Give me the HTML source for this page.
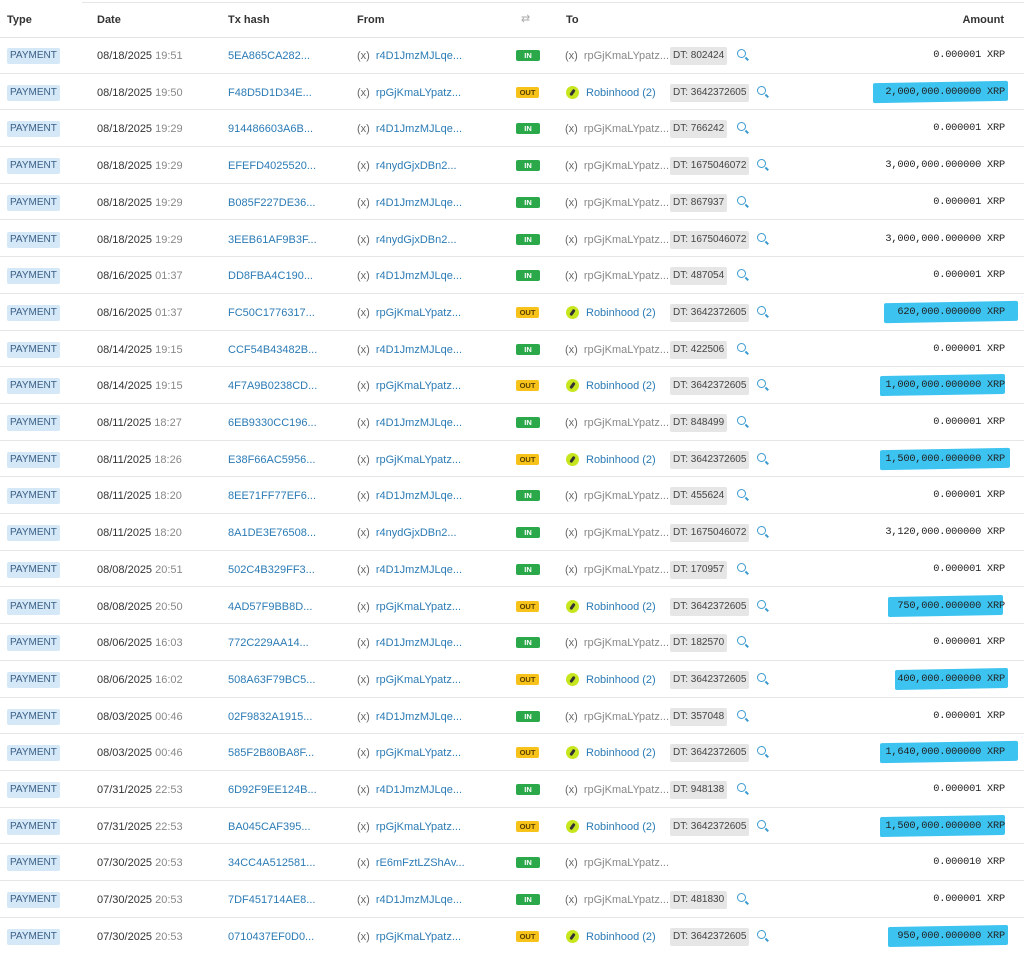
<!DOCTYPE html>
<html><head><meta charset="utf-8"><style>
body{margin:0;width:1024px;height:956px;background:#fff;font-family:"Liberation Sans",sans-serif;font-size:11px;color:#333;overflow:hidden;position:relative}
.top{position:absolute;left:82px;top:2px;right:0;border-top:1px solid #e6e6e6}
.h{position:absolute;top:0;left:0;width:1024px;height:37px;border-bottom:1px solid #e4e4e4;font-weight:bold;font-size:11px}
.h span{position:absolute;top:14px}
.r{position:absolute;left:0;width:1024px;height:36.7px;box-sizing:border-box;border-bottom:1px solid #e6e6e6}
.r>*{position:absolute}
.t{left:7px;top:11px;background:#d5e8f8;color:#3a5f85;font-size:10px;padding:2px 3px;border-radius:2px;line-height:12px}
.d{left:97px;top:13px}.d i{font-style:normal;color:#888}
.x{left:228px;top:13px;color:#2b7bb5}
.f{left:357px;top:13px;color:#2b7bb5}.f b,.to b{font-weight:normal;color:#666;margin-right:6px}
.in,.out{left:516px;top:13px;font-size:7.5px;font-weight:bold;line-height:11px;border-radius:2px;text-align:center}
.in{background:#2aa84a;color:#fff;width:24px}
.out{background:#f7c21a;color:#5a4000;width:23px}
.to{left:565px;top:13px;color:#888}
.rh{left:566px;top:12px;width:13px;height:13px;border-radius:50%;background:#c8e61e}
.rh:after{content:"";position:absolute;left:5px;top:3px;width:3px;height:7px;background:#333;border-radius:2px;transform:rotate(35deg)}
.rn{left:586px;top:13px;color:#2b7bb5}
.dt{left:670px;top:10px;background:#e6e6e6;color:#444;padding:3px 3px;border-radius:2px;line-height:12px;font-size:10px}
.m{top:12px;width:7px;height:7px;border:1.5px solid #3a9bd0;border-radius:50%}
.m:after{content:"";position:absolute;left:7px;top:8px;width:4px;height:1.5px;background:#3a9bd0;transform:rotate(45deg)}
.hl{background:#3cc3f0;height:20px;top:8px;border-radius:2px;transform:skewY(-1deg)}
.a{right:19px;top:12px;font-family:"Liberation Mono",monospace;font-size:10.3px;letter-spacing:-0.2px;color:#222}
</style></head><body>
<div class="top"></div>
<div class="h"><span style="left:7px">Type</span><span style="left:97px">Date</span><span style="left:228px">Tx hash</span><span style="left:357px">From</span><span style="left:521px;color:#aaa;font-weight:normal;top:12px">⇄</span><span style="left:566px">To</span><span style="right:20px">Amount</span></div>

<div class="r" style="top:37px"><span class="t">PAYMENT</span><span class="d">08/18/2025 <i>19:51</i></span><span class="x">5EA865CA282...</span><span class="f"><b>(x)</b>r4D1JmzMJLqe...</span><span class="in">IN</span><span class="to"><b>(x)</b>rpGjKmaLYpatz...</span><span class="dt">DT: 802424</span><span class="m" style="left:737px"></span><span class="a">0.000001 XRP</span></div>
<div class="r" style="top:73.7px"><span class="t">PAYMENT</span><span class="d">08/18/2025 <i>19:50</i></span><span class="x">F48D5D1D34E...</span><span class="f"><b>(x)</b>rpGjKmaLYpatz...</span><span class="out">OUT</span><span class="rh"></span><span class="rn">Robinhood (2)</span><span class="dt">DT: 3642372605</span><span class="m" style="left:757px"></span><span class="hl" style="left:873px;width:135px"></span><span class="a">2,000,000.000000 XRP</span></div>
<div class="r" style="top:110.4px"><span class="t">PAYMENT</span><span class="d">08/18/2025 <i>19:29</i></span><span class="x">914486603A6B...</span><span class="f"><b>(x)</b>r4D1JmzMJLqe...</span><span class="in">IN</span><span class="to"><b>(x)</b>rpGjKmaLYpatz...</span><span class="dt">DT: 766242</span><span class="m" style="left:737px"></span><span class="a">0.000001 XRP</span></div>
<div class="r" style="top:147.1px"><span class="t">PAYMENT</span><span class="d">08/18/2025 <i>19:29</i></span><span class="x">EFEFD4025520...</span><span class="f"><b>(x)</b>r4nydGjxDBn2...</span><span class="in">IN</span><span class="to"><b>(x)</b>rpGjKmaLYpatz...</span><span class="dt">DT: 1675046072</span><span class="m" style="left:757px"></span><span class="a">3,000,000.000000 XRP</span></div>
<div class="r" style="top:183.8px"><span class="t">PAYMENT</span><span class="d">08/18/2025 <i>19:29</i></span><span class="x">B085F227DE36...</span><span class="f"><b>(x)</b>r4D1JmzMJLqe...</span><span class="in">IN</span><span class="to"><b>(x)</b>rpGjKmaLYpatz...</span><span class="dt">DT: 867937</span><span class="m" style="left:737px"></span><span class="a">0.000001 XRP</span></div>
<div class="r" style="top:220.5px"><span class="t">PAYMENT</span><span class="d">08/18/2025 <i>19:29</i></span><span class="x">3EEB61AF9B3F...</span><span class="f"><b>(x)</b>r4nydGjxDBn2...</span><span class="in">IN</span><span class="to"><b>(x)</b>rpGjKmaLYpatz...</span><span class="dt">DT: 1675046072</span><span class="m" style="left:757px"></span><span class="a">3,000,000.000000 XRP</span></div>
<div class="r" style="top:257.2px"><span class="t">PAYMENT</span><span class="d">08/16/2025 <i>01:37</i></span><span class="x">DD8FBA4C190...</span><span class="f"><b>(x)</b>r4D1JmzMJLqe...</span><span class="in">IN</span><span class="to"><b>(x)</b>rpGjKmaLYpatz...</span><span class="dt">DT: 487054</span><span class="m" style="left:737px"></span><span class="a">0.000001 XRP</span></div>
<div class="r" style="top:293.9px"><span class="t">PAYMENT</span><span class="d">08/16/2025 <i>01:37</i></span><span class="x">FC50C1776317...</span><span class="f"><b>(x)</b>rpGjKmaLYpatz...</span><span class="out">OUT</span><span class="rh"></span><span class="rn">Robinhood (2)</span><span class="dt">DT: 3642372605</span><span class="m" style="left:757px"></span><span class="hl" style="left:884px;width:134px"></span><span class="a">620,000.000000 XRP</span></div>
<div class="r" style="top:330.6px"><span class="t">PAYMENT</span><span class="d">08/14/2025 <i>19:15</i></span><span class="x">CCF54B43482B...</span><span class="f"><b>(x)</b>r4D1JmzMJLqe...</span><span class="in">IN</span><span class="to"><b>(x)</b>rpGjKmaLYpatz...</span><span class="dt">DT: 422506</span><span class="m" style="left:737px"></span><span class="a">0.000001 XRP</span></div>
<div class="r" style="top:367.3px"><span class="t">PAYMENT</span><span class="d">08/14/2025 <i>19:15</i></span><span class="x">4F7A9B0238CD...</span><span class="f"><b>(x)</b>rpGjKmaLYpatz...</span><span class="out">OUT</span><span class="rh"></span><span class="rn">Robinhood (2)</span><span class="dt">DT: 3642372605</span><span class="m" style="left:757px"></span><span class="hl" style="left:880px;width:125px"></span><span class="a">1,000,000.000000 XRP</span></div>
<div class="r" style="top:404px"><span class="t">PAYMENT</span><span class="d">08/11/2025 <i>18:27</i></span><span class="x">6EB9330CC196...</span><span class="f"><b>(x)</b>r4D1JmzMJLqe...</span><span class="in">IN</span><span class="to"><b>(x)</b>rpGjKmaLYpatz...</span><span class="dt">DT: 848499</span><span class="m" style="left:737px"></span><span class="a">0.000001 XRP</span></div>
<div class="r" style="top:440.7px"><span class="t">PAYMENT</span><span class="d">08/11/2025 <i>18:26</i></span><span class="x">E38F66AC5956...</span><span class="f"><b>(x)</b>rpGjKmaLYpatz...</span><span class="out">OUT</span><span class="rh"></span><span class="rn">Robinhood (2)</span><span class="dt">DT: 3642372605</span><span class="m" style="left:757px"></span><span class="hl" style="left:880px;width:130px"></span><span class="a">1,500,000.000000 XRP</span></div>
<div class="r" style="top:477.4px"><span class="t">PAYMENT</span><span class="d">08/11/2025 <i>18:20</i></span><span class="x">8EE71FF77EF6...</span><span class="f"><b>(x)</b>r4D1JmzMJLqe...</span><span class="in">IN</span><span class="to"><b>(x)</b>rpGjKmaLYpatz...</span><span class="dt">DT: 455624</span><span class="m" style="left:737px"></span><span class="a">0.000001 XRP</span></div>
<div class="r" style="top:514.1px"><span class="t">PAYMENT</span><span class="d">08/11/2025 <i>18:20</i></span><span class="x">8A1DE3E76508...</span><span class="f"><b>(x)</b>r4nydGjxDBn2...</span><span class="in">IN</span><span class="to"><b>(x)</b>rpGjKmaLYpatz...</span><span class="dt">DT: 1675046072</span><span class="m" style="left:757px"></span><span class="a">3,120,000.000000 XRP</span></div>
<div class="r" style="top:550.8px"><span class="t">PAYMENT</span><span class="d">08/08/2025 <i>20:51</i></span><span class="x">502C4B329FF3...</span><span class="f"><b>(x)</b>r4D1JmzMJLqe...</span><span class="in">IN</span><span class="to"><b>(x)</b>rpGjKmaLYpatz...</span><span class="dt">DT: 170957</span><span class="m" style="left:737px"></span><span class="a">0.000001 XRP</span></div>
<div class="r" style="top:587.5px"><span class="t">PAYMENT</span><span class="d">08/08/2025 <i>20:50</i></span><span class="x">4AD57F9BB8D...</span><span class="f"><b>(x)</b>rpGjKmaLYpatz...</span><span class="out">OUT</span><span class="rh"></span><span class="rn">Robinhood (2)</span><span class="dt">DT: 3642372605</span><span class="m" style="left:757px"></span><span class="hl" style="left:888px;width:115px"></span><span class="a">750,000.000000 XRP</span></div>
<div class="r" style="top:624.2px"><span class="t">PAYMENT</span><span class="d">08/06/2025 <i>16:03</i></span><span class="x">772C229AA14...</span><span class="f"><b>(x)</b>r4D1JmzMJLqe...</span><span class="in">IN</span><span class="to"><b>(x)</b>rpGjKmaLYpatz...</span><span class="dt">DT: 182570</span><span class="m" style="left:737px"></span><span class="a">0.000001 XRP</span></div>
<div class="r" style="top:660.9px"><span class="t">PAYMENT</span><span class="d">08/06/2025 <i>16:02</i></span><span class="x">508A63F79BC5...</span><span class="f"><b>(x)</b>rpGjKmaLYpatz...</span><span class="out">OUT</span><span class="rh"></span><span class="rn">Robinhood (2)</span><span class="dt">DT: 3642372605</span><span class="m" style="left:757px"></span><span class="hl" style="left:895px;width:113px"></span><span class="a">400,000.000000 XRP</span></div>
<div class="r" style="top:697.6px"><span class="t">PAYMENT</span><span class="d">08/03/2025 <i>00:46</i></span><span class="x">02F9832A1915...</span><span class="f"><b>(x)</b>r4D1JmzMJLqe...</span><span class="in">IN</span><span class="to"><b>(x)</b>rpGjKmaLYpatz...</span><span class="dt">DT: 357048</span><span class="m" style="left:737px"></span><span class="a">0.000001 XRP</span></div>
<div class="r" style="top:734.3px"><span class="t">PAYMENT</span><span class="d">08/03/2025 <i>00:46</i></span><span class="x">585F2B80BA8F...</span><span class="f"><b>(x)</b>rpGjKmaLYpatz...</span><span class="out">OUT</span><span class="rh"></span><span class="rn">Robinhood (2)</span><span class="dt">DT: 3642372605</span><span class="m" style="left:757px"></span><span class="hl" style="left:880px;width:138px"></span><span class="a">1,640,000.000000 XRP</span></div>
<div class="r" style="top:771px"><span class="t">PAYMENT</span><span class="d">07/31/2025 <i>22:53</i></span><span class="x">6D92F9EE124B...</span><span class="f"><b>(x)</b>r4D1JmzMJLqe...</span><span class="in">IN</span><span class="to"><b>(x)</b>rpGjKmaLYpatz...</span><span class="dt">DT: 948138</span><span class="m" style="left:737px"></span><span class="a">0.000001 XRP</span></div>
<div class="r" style="top:807.7px"><span class="t">PAYMENT</span><span class="d">07/31/2025 <i>22:53</i></span><span class="x">BA045CAF395...</span><span class="f"><b>(x)</b>rpGjKmaLYpatz...</span><span class="out">OUT</span><span class="rh"></span><span class="rn">Robinhood (2)</span><span class="dt">DT: 3642372605</span><span class="m" style="left:757px"></span><span class="hl" style="left:880px;width:125px"></span><span class="a">1,500,000.000000 XRP</span></div>
<div class="r" style="top:844.4px"><span class="t">PAYMENT</span><span class="d">07/30/2025 <i>20:53</i></span><span class="x">34CC4A512581...</span><span class="f"><b>(x)</b>rE6mFztLZShAv...</span><span class="in">IN</span><span class="to"><b>(x)</b>rpGjKmaLYpatz...</span><span class="a">0.000010 XRP</span></div>
<div class="r" style="top:881.1px"><span class="t">PAYMENT</span><span class="d">07/30/2025 <i>20:53</i></span><span class="x">7DF451714AE8...</span><span class="f"><b>(x)</b>r4D1JmzMJLqe...</span><span class="in">IN</span><span class="to"><b>(x)</b>rpGjKmaLYpatz...</span><span class="dt">DT: 481830</span><span class="m" style="left:737px"></span><span class="a">0.000001 XRP</span></div>
<div class="r" style="top:917.8px;border-bottom:none"><span class="t">PAYMENT</span><span class="d">07/30/2025 <i>20:53</i></span><span class="x">0710437EF0D0...</span><span class="f"><b>(x)</b>rpGjKmaLYpatz...</span><span class="out">OUT</span><span class="rh"></span><span class="rn">Robinhood (2)</span><span class="dt">DT: 3642372605</span><span class="m" style="left:757px"></span><span class="hl" style="left:888px;width:120px"></span><span class="a">950,000.000000 XRP</span></div>
</body></html>
